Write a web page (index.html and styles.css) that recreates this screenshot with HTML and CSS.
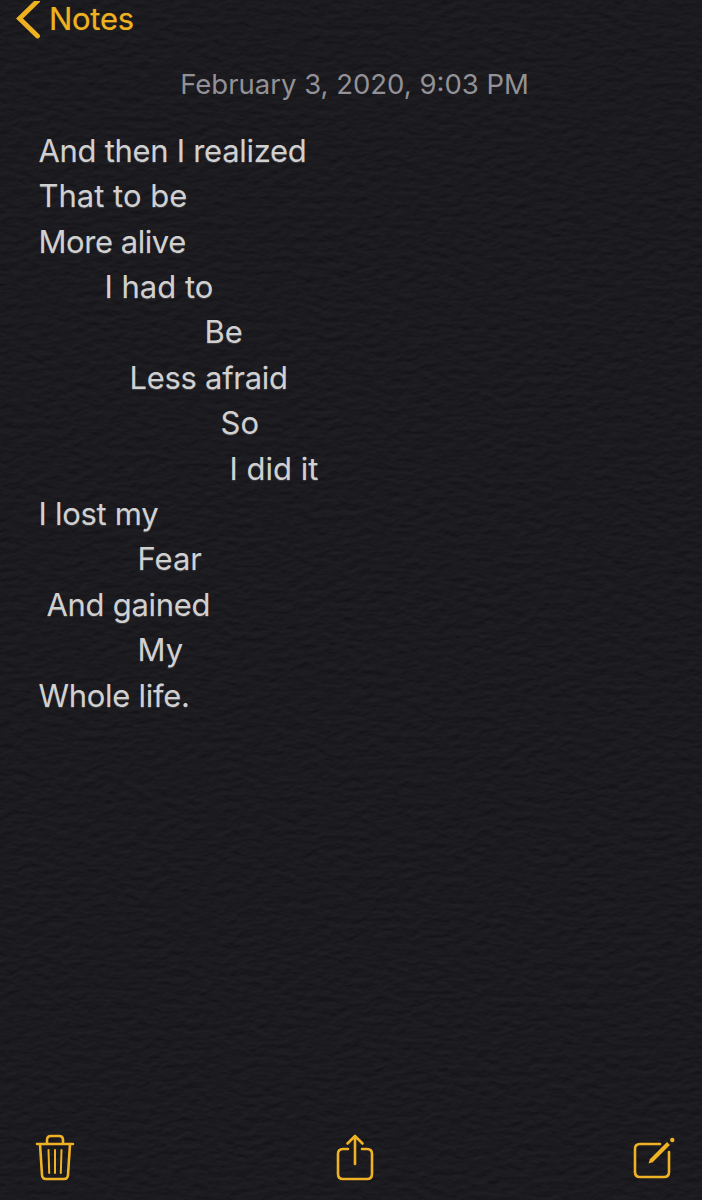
FILE: index.html
```html
<!DOCTYPE html>
<html lang="en">
<head>
<meta charset="utf-8">
<title>Notes</title>
<link rel="stylesheet" href="styles.css">
</head>
<body>
<svg class="paper" width="702" height="1200" aria-hidden="true">
  <filter id="grain" x="0" y="0" width="100%" height="100%" color-interpolation-filters="sRGB">
    <feTurbulence type="fractalNoise" baseFrequency="0.08 0.15" numOctaves="3" seed="8" result="noise"/>
    <feDiffuseLighting in="noise" surfaceScale="0.8" diffuseConstant="1" lighting-color="#ffffff" result="light">
      <feDistantLight azimuth="80" elevation="50"/>
    </feDiffuseLighting>
    <feColorMatrix type="matrix" values="0.15 0 0 0 -0.008  0.15 0 0 0 -0.011  0.15 0 0 0 0.008  0 0 0 0 1"/>
  </filter>
  <rect width="702" height="1200" filter="url(#grain)"/>
</svg>
<div class="screen">
  <header class="nav">
    <svg class="chevron" viewBox="0 0 26 42"><path d="M23.500 0 5.500 17.500 23.500 35"/></svg>
    <span class="back">Notes</span>
  </header>
  <time class="date">February 3, 2020, 9:03 PM</time>
  <main class="note">
    <p class="tight">And then I realized</p>
    <p>That to be</p>
    <p class="tighter">More alive</p>
    <p class="in8">I had to</p>
    <p class="in20">Be</p>
    <p class="in11 tight">Less afraid</p>
    <p class="in22">So</p>
    <p class="in23">I did it</p>
    <p class="tight">I lost my</p>
    <p class="in12">Fear</p>
    <p class="in1 tight">And gained</p>
    <p class="in12">My</p>
    <p class="tight">Whole life.</p>
  </main>
  <footer class="toolbar">
    <svg class="icon" viewBox="0 0 80 80">
      <path d="M17 24H53M20 24l2 31q.3 4 4 4h18q3.700 0 4-4l2-31M27 24v-4q0-4 4-4h8q4 0 4 4v4"/>
      <path class="thin" d="M28.500 30l.7 23M35 30v23M41.500 30l-.7 23"/>
    </svg>
    <svg class="icon" viewBox="0 0 80 80">
      <path d="M33 29h-5q-5 0-5 5v20q0 5 5 5h24q5 0 5-5V34q0-5-5-5h-5M40 44V16M32.500 23.500 40 16l7.500 7.500"/>
    </svg>
    <svg class="icon" viewBox="0 0 80 80">
      <path d="M38 24H18q-5 0-5 5v23q0 5 5 5h24q5 0 5-5V32"/>
      <path class="pen" d="M29 41 46.500 23.500"/>
      <path class="fill" d="M26.500 43.500l1.500-4.500 3 3z"/>
      <circle class="fill" cx="50.300" cy="20" r="2.200"/>
    </svg>
  </footer>
</div>
</body>
</html>
```
FILE: styles.css
```css
body {
  margin: 0;
  background: #1c1b20;
  font-family: Inter, "Liberation Sans", sans-serif;
}
.paper {
  position: absolute;
  inset: 0;
}
.screen {
  position: relative;
  display: flex;
  flex-direction: column;
  width: 702px;
  height: 1200px;
  overflow: hidden;
}
.nav {
  display: flex;
  height: 42px;
  padding-left: 14px;
  color: #eeb120;
}
.chevron {
  width: 26px;
  height: 42px;
  margin-top: 1px;
  fill: none;
  stroke: #eeb120;
  stroke-width: 4.8;
  stroke-linecap: round;
  stroke-linejoin: miter;
}
.back {
  margin-left: 9px;
  font-size: 31px;
  line-height: 38px;
  letter-spacing: -0.3px;
  text-shadow: 0 0 1px #eeb12080;
}
.date {
  margin-top: 24px;
  padding-left: 7px;
  text-align: center;
  color: #929196;
  font-size: 27.5px;
  line-height: 36px;
}
.note {
  flex: 1;
  padding: 25.800px 0 0 38.500px;
  color: #d0d0d1;
  font-size: 31px;
  line-height: 45.4px;
  text-shadow: 0 1px 1px #77777b66;
}
.note p {
  margin: 0;
  white-space: pre;
}
.note .tight { letter-spacing: -0.3px; }
.note .tighter { letter-spacing: -0.45px; }
.note .in1 { padding-left: 8px; }
.note .in8 { padding-left: 66px; }
.note .in11 { padding-left: 91px; }
.note .in12 { padding-left: 99px; }
.note .in20 { padding-left: 166px; }
.note .in22 { padding-left: 182px; }
.note .in23 { padding-left: 191px; }
.toolbar {
  display: flex;
  height: 80px;
  padding-left: 20px;
  gap: 215px;
}
.icon {
  flex: none;
  width: 80px;
  height: 80px;
  fill: none;
  stroke: #efb225;
  stroke-width: 2.6;
  stroke-linecap: round;
  stroke-linejoin: round;
}
.icon:last-child { margin-left: 12px; }
.icon .thin { stroke-width: 2; }
.icon .pen { stroke-width: 4; stroke-linecap: butt; }
.icon .fill { fill: #efb225; stroke-width: 0; }
```
